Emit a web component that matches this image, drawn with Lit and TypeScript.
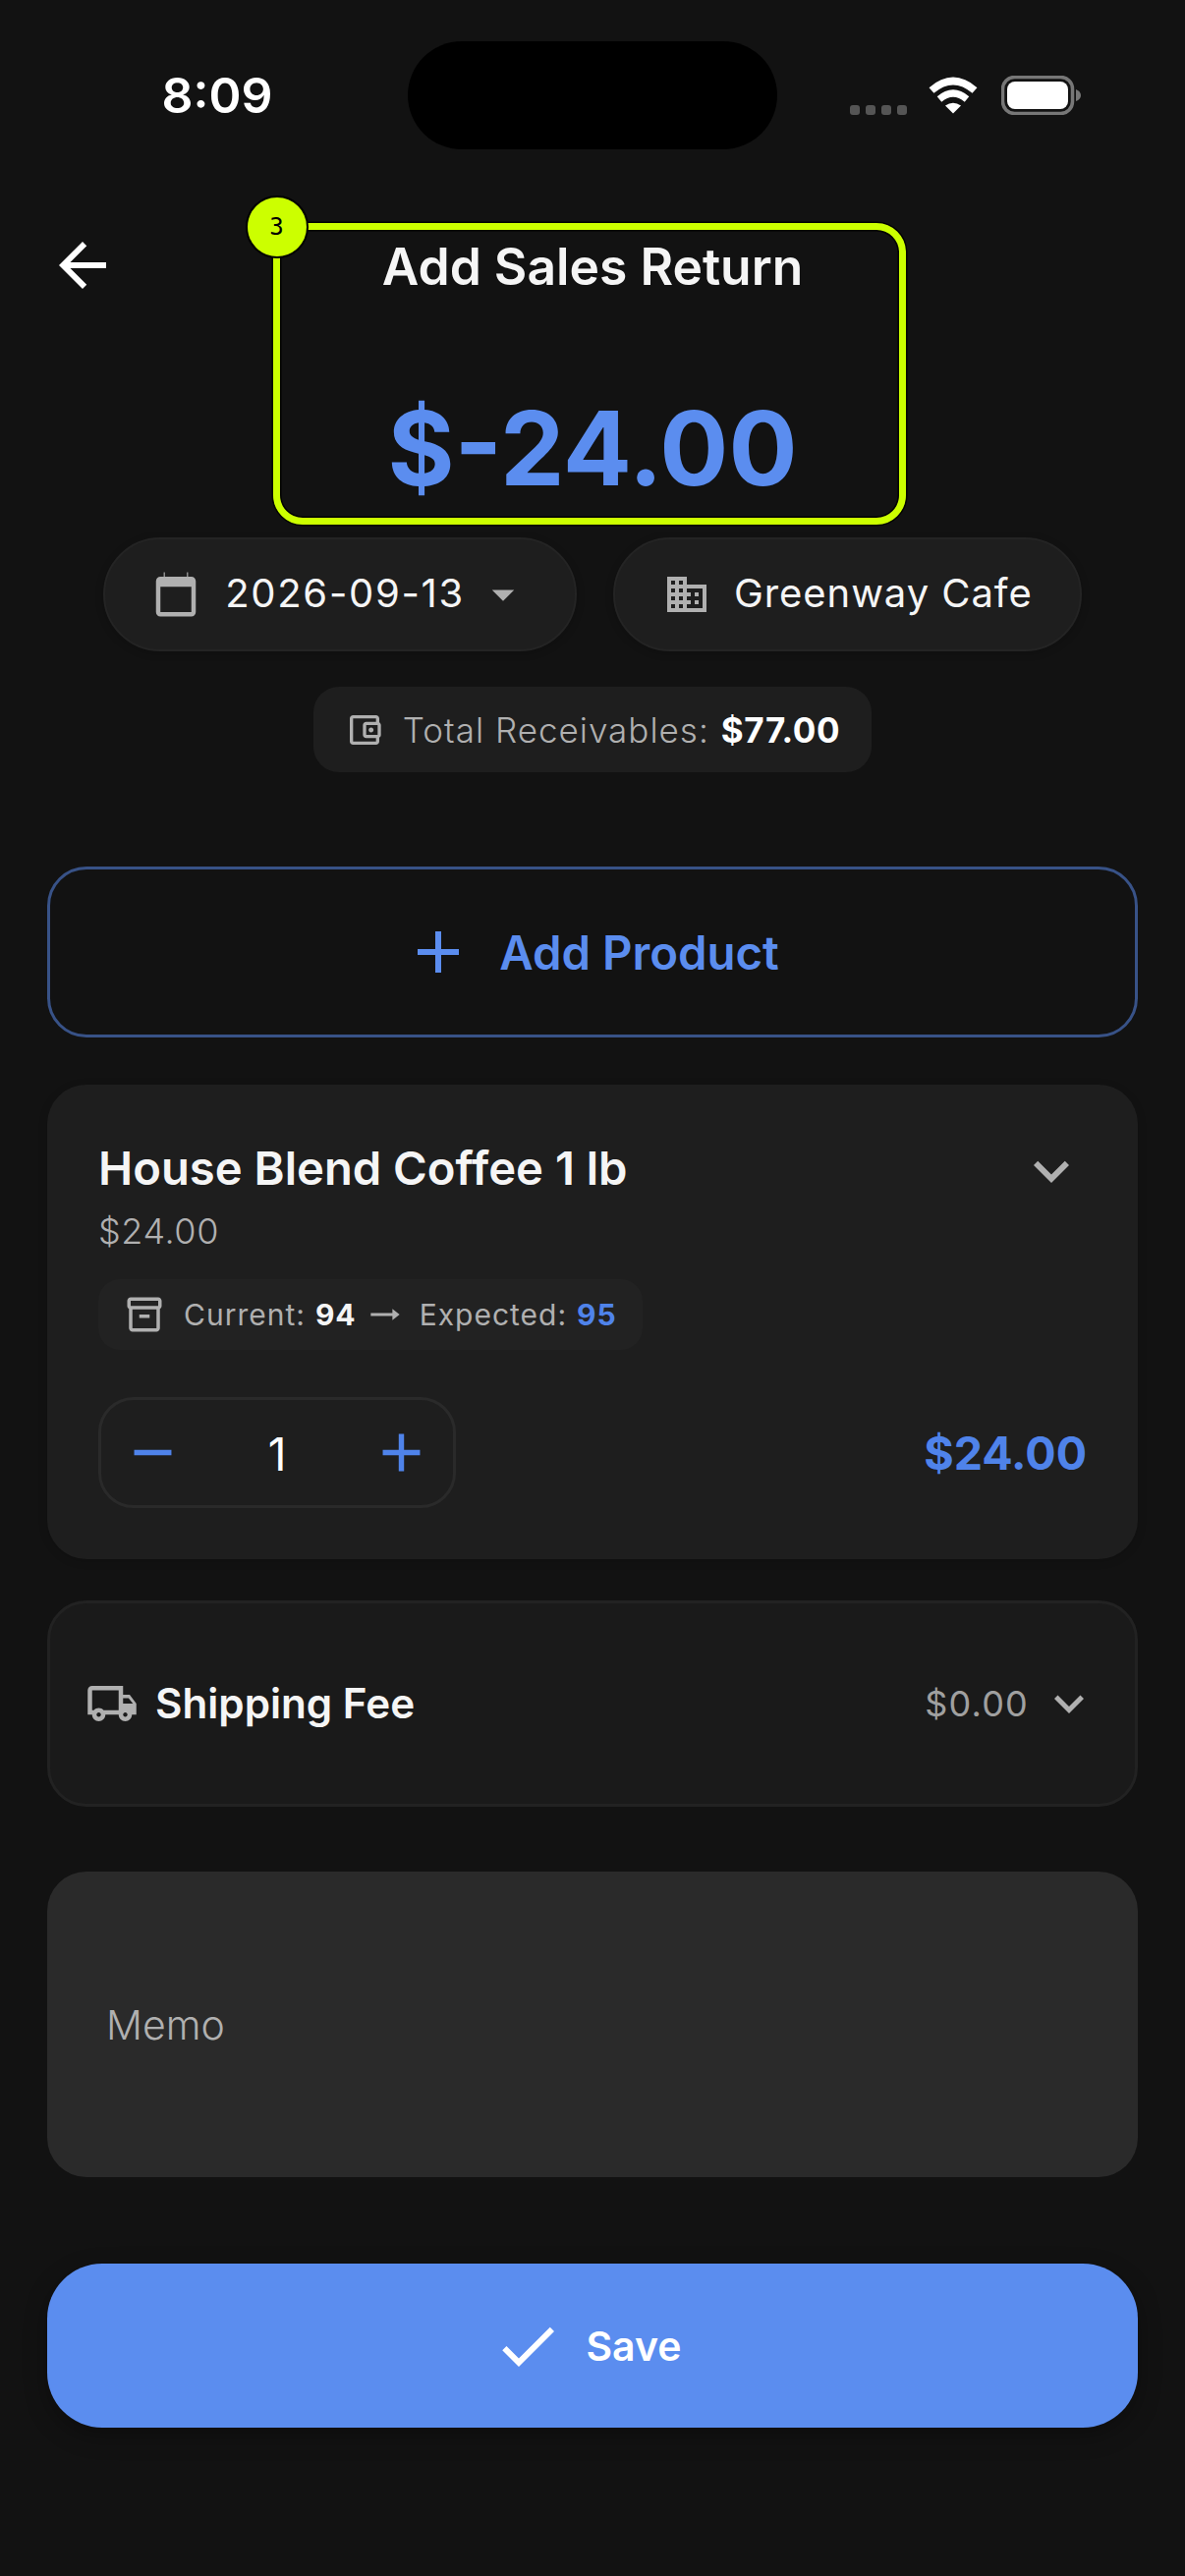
import { LitElement, html, css, svg } from "lit";
import { customElement } from "lit/decorators.js";

const P = {
  back: "M20 11H7.83l5.59-5.59L12 4l-8 8 8 8 1.41-1.41L7.83 13H20v-2z",
  cal: "M6.5 2h.5v2h10V2h.5v2H19c1.1 0 2 .9 2 2v14c0 1.1-.9 2-2 2H5c-1.1 0-2-.9-2-2V6c0-1.1.9-2 2-2h1.5V2zM19 20V8.5H5V20h14z",
  drop: "M7 10l5 5 5-5z",
  domain: "M12 7V3H2v18h20V7H12zM6 19H4v-2h2v2zm0-4H4v-2h2v2zm0-4H4V9h2v2zm0-4H4V5h2v2zm4 12H8v-2h2v2zm0-4H8v-2h2v2zm0-4H8V9h2v2zm0-4H8V5h2v2zm10 12h-8v-2h2v-2h-2v-2h2v-2h-2V9h8v10zm-2-8h-2v2h2v-2zm0 4h-2v2h2v-2z",
  wallet: "M21 7.28V5c0-1.1-.9-2-2-2H5c-1.11 0-2 .9-2 2v14c0 1.1.89 2 2 2h14c1.1 0 2-.9 2-2v-2.28c.59-.35 1-.98 1-1.72V9c0-.74-.41-1.37-1-1.72zM20 9v6h-7V9h7zM5 19V5h14v2h-6c-1.1 0-2 .9-2 2v6c0 1.1.9 2 2 2h6v2H5zm11-5.5c.83 0 1.5-.67 1.5-1.5s-.67-1.5-1.5-1.5-1.5.67-1.5 1.5.67 1.5 1.5 1.5z",
  add: "M19 13h-6v6h-2v-6H5v-2h6V5h2v6h6v2z",
  remove: "M19 13H5v-2h14v2z",
  more: "M16.59 8.59L12 13.17 7.41 8.59 6 10l6 6 6-6z",
  box: "M20 2H4c-1 0-2 .9-2 2v3.01c0 .72.43 1.34 1 1.69V20c0 1.1 1.1 2 2 2h14c.9 0 2-.9 2-2V8.7c.57-.35 1-.97 1-1.69V4c0-1.1-1-2-2-2zm-1 18H5V9h14v11zm1-13H4V4h16v3zM9 12h6v2H9z",
  arrow: "M16.01 11.2H4v1.6h12.01v2.4L20 12l-3.99-3.2z",
  truck: "M20 8h-3V4H3c-1.1 0-2 .9-2 2v11h2c0 1.66 1.34 3 3 3s3-1.34 3-3h6c0 1.66 1.34 3 3 3s3-1.34 3-3h2v-5l-3-4zm-.5 1.5l1.96 2.5H17V9.5h2.5zM6 18c-.55 0-1-.45-1-1s.45-1 1-1 1 .45 1 1-.45 1-1 1zm2.22-3c-.55-.61-1.33-1-2.22-1s-1.67.39-2.22 1H3V6h12v9H8.22zM18 18c-.55 0-1-.45-1-1s.45-1 1-1 1 .45 1 1-.45 1-1 1z",
  check: "M9 16.17L4.83 12l-1.42 1.41L9 19 21 7l-1.41-1.41z",
};

const icon = (d: string, size: number, cls = "") => html`<svg class=${cls} style="width:${size}px;height:${size}px" viewBox="0 0 24 24" fill="currentColor"><path d=${d}></path></svg>`;

@customElement("app-root")
export class AppRoot extends LitElement {
  static styles = css`
    :host { display: block; width: 1206px; min-height: 2622px; background: #121212; font-family: Inter, "Liberation Sans", sans-serif; color: #f5f5f5; }
    * { box-sizing: border-box; }
    svg { display: block; flex: none; }
    .page { display: flex; flex-direction: column; padding: 0 48px; min-height: 2622px; }
    .status { display: flex; align-items: center; margin: 42px -48px 0; height: 110px; }
    .time { width: 415px; padding-left: 27px; text-align: center; font-size: 50px; font-weight: 600; color: #fff; }
    .island { width: 376px; height: 110px; border-radius: 55px; background: #000; }
    .sys { display: flex; align-items: center; padding-left: 74px; }
    .dots { display: flex; gap: 6px; margin-top: 29px; margin-right: 22px; }
    .dots i { width: 10px; height: 10px; border-radius: 3px; background: #555; }
    .bat { margin-left: 24px; }
    .header { display: grid; grid-template-columns: 230px 644px 1fr; margin-top: 75px; }
    .back { margin-top: 7px; color: #fff; }
    .hbox { position: relative; width: 644px; height: 307px; border: 7px solid #ccff00; border-radius: 30px; box-shadow: 0 0 0 1.5px #000, inset 0 0 0 1.5px #000; display: flex; flex-direction: column; align-items: center; padding-left: 6px; }
    .badge { position: absolute; left: -35.5px; top: -35.5px; width: 64px; height: 64px; border-radius: 50%; background: #ccff00; border: 2px solid #000; color: #000; display: flex; align-items: center; justify-content: center; font: 24px "DejaVu Sans Mono", monospace; }
    .title { font-size: 51.6px; line-height: 60px; font-weight: 600; margin-top: 7px; color: #f5f5f5; }
    .amount { font-size: 104px; line-height: 116px; font-weight: 700; color: #5b8def; margin-top: 97px; }
    .pills { display: flex; justify-content: center; gap: 37px; margin-top: 13px; }
    .pill { height: 116px; border-radius: 58px; background: #1e1e1e; border: 2px solid #242424; display: flex; align-items: center; font-size: 40px; color: #f5f5f5; box-shadow: 0 2px 8px rgba(0,0,0,.2); }
    .pill.date { padding: 0 46px 0 45px; letter-spacing: 1.7px; }
    .pill.cust { padding: 0 48px 0 49px; letter-spacing: 0.95px; }
    .pill svg { color: #b0b0b0; }
    .pill .lbl { margin: 0 0 3px 23px; }
    .pill.cust .lbl { margin-left: 24px; }
    .pill .car { margin-left: 12px; }
    .rec { align-self: center; margin-top: 36px; height: 87px; border-radius: 26px; background: #1e1e1e; display: flex; align-items: center; padding: 0 32px 0 32px; font-size: 35px; font-weight: 300; letter-spacing: 1px; color: #b0b0b0; }
    .rec svg { margin-right: 19px; }
    .rec b { font-weight: 700; color: #fff; letter-spacing: .6px; margin-left: 12px; }
    .addp { margin-top: 96px; height: 174px; border: 3px solid #385287; border-radius: 40px; display: flex; align-items: center; justify-content: center; color: #5b8def; font-size: 47.3px; font-weight: 600; gap: 26px; padding-right: 3px; }
    .card { margin-top: 48px; height: 483px; background: #1e1e1e; border-radius: 40px; padding: 52px; display: flex; flex-direction: column; box-shadow: 0 2px 10px rgba(0,0,0,.15); }
    .ctop { display: flex; justify-content: space-between; align-items: flex-start; }
    .pname { font-size: 47.2px; font-weight: 600; line-height: 56px; color: #f5f5f5; margin-top: 5px; }
    .chev { color: #b0b0b0; margin-top: 0; }
    .price { font-size: 36px; font-weight: 300; line-height: 44px; letter-spacing: .6px; color: #b0b0b0; margin-top: 3px; }
    .stock { align-self: flex-start; margin-top: 27px; width: 554px; height: 72px; border-radius: 22px; background: #222; display: flex; align-items: center; padding: 0 26px 0 26px; font-size: 30px; letter-spacing: 1px; font-weight: 400; color: #b0b0b0; white-space: nowrap; }
    .stock svg { margin-right: 19px; }
    .stock b { font-weight: 700; color: #f5f5f5; margin-left: 10px; }
    .stock b.blue { color: #4f83ea; }
    .stock svg.arr { margin: 0 13px 0 7px; color: #b0b0b0; }
    .cbot { display: flex; justify-content: space-between; align-items: center; margin-top: 48px; }
    .stepper { width: 364px; height: 113px; border: 3px solid #2a2a2a; border-radius: 36px; display: flex; align-items: center; justify-content: space-between; padding: 0 20px; color: #4f83ea; }
    .stepper span { font-size: 46px; color: #fff; font-weight: 400; margin-top: 2px; }
    .total { font-size: 46.5px; font-weight: 700; color: #4f83ea; }
    .ship { margin-top: 42px; height: 210px; background: #1a1a1a; border: 3px solid #222; border-radius: 40px; display: flex; align-items: center; padding: 0 37px 0 35px; }
    .ship .t { color: #b0b0b0; margin-right: 17px; margin-left: 1px; }
    .ship .n { font-size: 42.2px; font-weight: 600; color: #f5f5f5; margin-bottom: 2px; }
    .ship .v { margin-left: auto; font-size: 36px; font-weight: 400; letter-spacing: 1.2px; color: #a0a0a0; margin-right: 11px; }
    .ship .c { color: #b0b0b0; }
    .memo { margin-top: 66px; height: 311px; background: #2a2a2a; border-radius: 40px; display: flex; align-items: center; padding-left: 60px; font-size: 41px; font-weight: 300; color: #b0b0b0; }
    .save { margin-top: 88px; height: 167px; background: #5b8def; border-radius: 56px; display: flex; align-items: center; justify-content: center; gap: 23px; font-size: 41px; font-weight: 600; color: #fff; box-shadow: 0 8px 24px rgba(0,0,0,.3); padding-right: 11px; }
  `;

  render() {
    return html`<div class="page">
      <div class="status">
        <div class="time">8:09</div>
        <div class="island"></div>
        <div class="sys">
          <div class="dots"><i></i><i></i><i></i><i></i></div>
          <svg width="50" height="38" viewBox="0 0 50 38" fill="none" stroke="#fff">${svg`
            <path d="M3 14 Q25 -5 47 14" stroke-width="7.5"></path>
            <path d="M11 23 Q25 11 39 23" stroke-width="7"></path>
            <path d="M17 29.5 Q25 24 33 29.5 L25 37.5Z" fill="#fff" stroke="none"></path>`}</svg>
          <svg class="bat" width="81" height="40" viewBox="0 0 81 40">${svg`
            <rect x="1.5" y="1.5" width="71" height="37" rx="12" fill="none" stroke="#777" stroke-width="3.5"></rect>
            <rect x="6" y="6" width="62" height="28" rx="8" fill="#fff"></rect>
            <path d="M76 14 Q81 16 81 20 Q81 24 76 26Z" fill="#777"></path>`}</svg>
        </div>
      </div>

      <div class="header">
        <div class="back">${icon(P.back, 72)}</div>
        <div class="hbox">
          <div class="badge">3</div>
          <div class="title">Add Sales Return</div>
          <div class="amount">$-24.00</div>
        </div>
        <div></div>
      </div>

      <div class="pills">
        <div class="pill date">${icon(P.cal, 54)}<span class="lbl">2026-09-13</span>${icon(P.drop, 54, "car")}</div>
        <div class="pill cust">${icon(P.domain, 48)}<span class="lbl">Greenway Cafe</span></div>
      </div>

      <div class="rec">${icon(P.wallet, 40)}<span>Total Receivables:</span><b>$77.00</b></div>

      <div class="addp">${icon(P.add, 72)}<span>Add Product</span></div>

      <div class="card">
        <div class="ctop">
          <div class="pname">House Blend Coffee 1 lb</div>
          <div class="chev">${icon(P.more, 72)}</div>
        </div>
        <div class="price">$24.00</div>
        <div class="stock">${icon(P.box, 42)}<span>Current:</span><b>94</b>${icon(P.arrow, 44, "arr")}<span>Expected:</span><b class="blue">95</b></div>
        <div class="cbot">
          <div class="stepper">${icon(P.remove, 65)}<span>1</span>${icon(P.add, 65)}</div>
          <div class="total">$24.00</div>
        </div>
      </div>

      <div class="ship">
        ${icon(P.truck, 54, "t")}
        <span class="n">Shipping Fee</span>
        <span class="v">$0.00</span>
        ${icon(P.more, 60, "c")}
      </div>

      <div class="memo">Memo</div>

      <div class="save">${icon(P.check, 72)}<span>Save</span></div>
    </div>`;
  }
}
